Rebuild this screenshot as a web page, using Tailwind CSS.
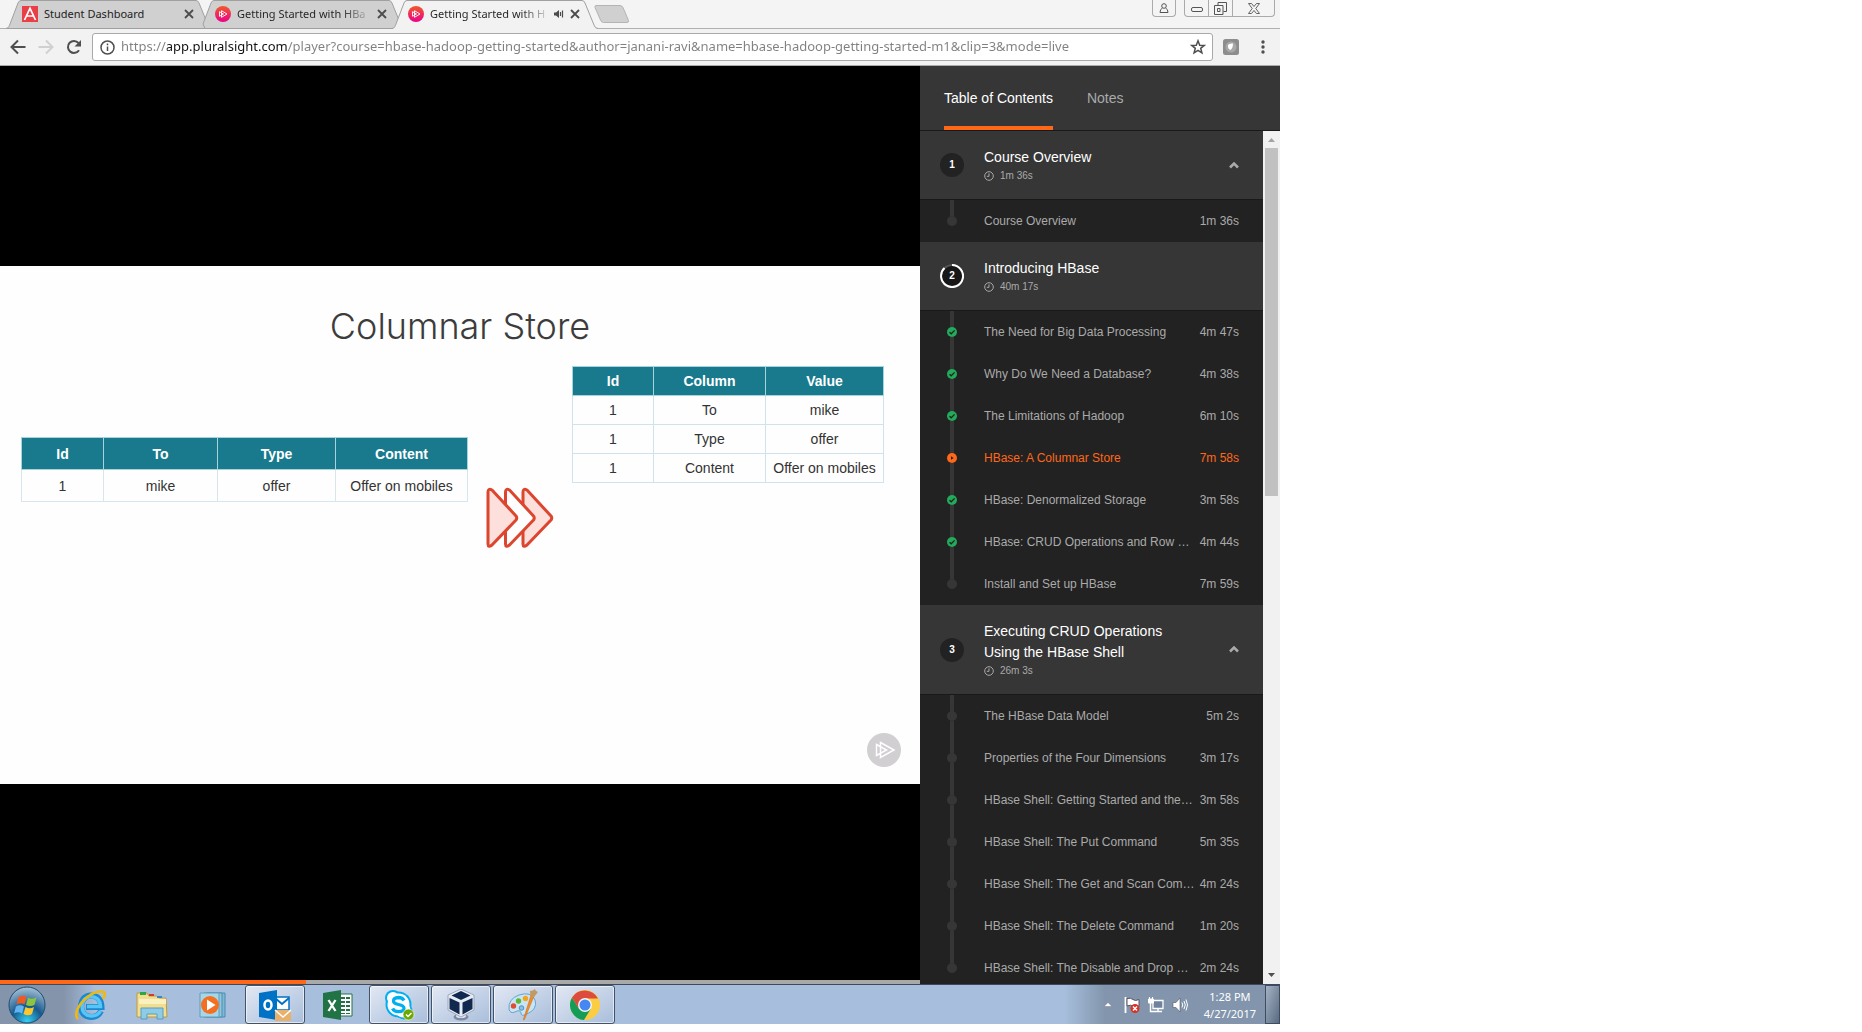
<!DOCTYPE html>
<html lang="en">
<head>
<meta charset="utf-8">
<title>Getting Started with HBase - Player</title>
<script src="https://cdn.jsdelivr.net/npm/@tailwindcss/browser@4"></script>
</head>
<body class="bg-white">
<svg class="absolute size-0" aria-hidden="true">
  <defs>
    <linearGradient id="ps" x1="0" y1="0" x2="0" y2="1"><stop offset="0" stop-color="#f05a28"/><stop offset="1" stop-color="#ec008c"/></linearGradient>
    <radialGradient id="orb" cx=".5" cy=".95" r=".95"><stop offset="0" stop-color="#35d0f5"/><stop offset=".45" stop-color="#17598c"/><stop offset="1" stop-color="#a9c3d8"/></radialGradient>
  </defs>
  <symbol id="close" viewBox="0 0 10 10"><path d="M1 1l8 8M9 1l-8 8" stroke="#4c4c4c" stroke-width="1.8"/></symbol>
  <symbol id="pluralsight" viewBox="0 0 16 16"><circle cx="8" cy="8" r="8" fill="url(#ps)"/><path d="M6.500 4.700L12 8l-5.500 3.300zM4.500 5.700L8.500 8l-4 2.300z" fill="none" stroke="#fff" stroke-width=".9"/></symbol>
  <symbol id="done" viewBox="0 0 10 10"><circle cx="5" cy="5" r="5" fill="#22ab5b"/><path d="M2.500 5.200l1.700 1.600L7.600 3.400" fill="none" stroke="#222" stroke-width="1.300"/></symbol>
  <symbol id="playing" viewBox="0 0 10 10"><circle cx="5" cy="5" r="5" fill="#ff6719"/><path d="M4 3.200v3.600L6.600 5z" fill="#222"/></symbol>
  <symbol id="clock" viewBox="0 0 10 10"><circle cx="5" cy="5" r="4.300" fill="none" stroke="#aaa"/><path d="M5 2.300V5.300H2.800" fill="none" stroke="#aaa"/></symbol>
  <symbol id="up" viewBox="0 0 10 7"><path d="M1 5.500l4-4 4 4" fill="none" stroke="#aaa" stroke-width="2.500"/></symbol>
</svg>

<div class="mx-0 flex h-screen w-full max-w-7xl flex-col pb-2">
  <!-- Browser tabs -->
  <header class="shrink-0 bg-[#f2f2f2] font-['Noto_Sans',sans-serif] text-[#222]">
    <div class="flex h-[29px] items-stretch border-b border-[#b0b0b0] bg-[#f4f4f4] pl-[6px]">
      <div class="relative flex w-[193px] items-center pr-[5px] pl-4">
        <svg class="absolute top-0 left-0 h-[29px] w-[206px]" viewBox="0 0 206 29"><path d="M0 28.500C3 28 3 26 4 24L12 3Q13 .5 15 .5H190Q192 .5 193 3L202 25Q203 28.500 206 28.500z" fill="#d0d0d0" stroke="#a0a0a0"/></svg>
        <svg class="relative size-4 shrink-0" viewBox="0 0 16 16"><path d="M0 0h16v16H0z" fill="#e93f46"/><path d="M2.500 14L8 2.300 13.500 14M4.500 10h7" fill="none" stroke="#fff" stroke-width="1.700"/></svg>
        <a href="#" class="relative ml-[6px] flex-1 text-[11px] whitespace-nowrap">Student Dashboard</a>
        <button aria-label="Close tab" class="relative"><svg class="size-[10px]"><use href="#close"/></svg></button>
      </div>
      <div class="relative flex w-[193px] items-center pr-[5px] pl-4">
        <svg class="absolute top-0 left-0 h-[29px] w-[206px]" viewBox="0 0 206 29"><path d="M4 24L12 3Q13 .5 15 .5H190Q192 .5 193 3L202 25Q203 28.500 206 28.500H6z" fill="#d0d0d0" stroke="#a0a0a0"/></svg>
        <svg class="relative size-4 shrink-0"><use href="#pluralsight"/></svg>
        <a href="#" class="relative ml-[6px] bg-linear-to-r from-[#222] from-80% to-[#222]/20 bg-clip-text text-[11px] whitespace-nowrap text-transparent">Getting Started with HBa</a>
        <button aria-label="Close tab" class="relative ml-auto"><svg class="size-[10px]"><use href="#close"/></svg></button>
      </div>
      <div class="relative flex w-[193px] items-center pr-[5px] pl-4">
        <svg class="absolute top-0 left-0 h-[29px] w-[206px]" viewBox="0 0 206 29"><path d="M0 29C3 28 3 26 4 24L12 3Q13 .5 15 .5H190Q192 .5 193 3L202 25Q203 28 206 29z" fill="#f2f2f2"/><path d="M0 28.500C3 28 3 26 4 24L12 3Q13 .5 15 .5H190Q192 .5 193 3L202 25Q203 28.500 206 28.500" fill="none" stroke="#a0a0a0"/></svg>
        <svg class="relative size-4 shrink-0"><use href="#pluralsight"/></svg>
        <a href="#" class="relative ml-[6px] bg-linear-to-r from-[#222] from-80% to-[#222]/20 bg-clip-text text-[11px] whitespace-nowrap text-transparent">Getting Started with H</a>
        <svg class="relative mr-[6px] ml-auto h-[10px] w-[10px] shrink-0" viewBox="0 0 10 10"><path d="M0 3.500h2L5 1v8L2 6.500H0z" fill="#4c4c4c"/><path d="M6.500 3v4M8.500 1.500v7" stroke="#4c4c4c" stroke-width="1.200"/></svg>
        <button aria-label="Close tab" class="relative"><svg class="size-[10px]"><use href="#close"/></svg></button>
      </div>
      <button aria-label="New tab" class="ml-[9px] self-center"><svg class="h-[18px] w-[36px]" viewBox="0 0 36 18"><path d="M2 .5H26Q28 .5 29 2.500L34.500 15.500Q35 17.500 33 17.500H9.500Q7.500 17.500 6.500 15L1 2.500Q.5 .5 2 .5z" fill="#d0d0d0" stroke="#b4b4b4"/></svg></button>
      <div class="mr-[5px] ml-auto flex h-[17px] text-[#555]">
        <button aria-label="User" class="mr-2 flex w-6 items-center justify-center rounded-b border border-t-0 border-[#aaa]"><svg class="h-[11px] w-[10px]" viewBox="0 0 10 11" fill="none" stroke="currentColor"><circle cx="5" cy="3" r="2.300"/><path d="M3.500 5Q1 6 1 9.500H9Q9 6 6.500 5"/></svg></button>
        <button aria-label="Minimize" class="flex w-[25px] items-center justify-center rounded-bl border border-t-0 border-[#aaa] pt-[3px]"><svg class="h-[5px] w-3" viewBox="0 0 12 5" fill="none" stroke="currentColor"><rect x=".5" y=".5" width="11" height="4" rx="1.500"/></svg></button>
        <button aria-label="Restore" class="flex w-6 items-center justify-center border-r border-b border-[#aaa]"><svg class="size-[13px]" viewBox="0 0 13 13" fill="none" stroke="currentColor"><path d="M4 3.500V.5h8.500v9h-3M.5 3.500h8.500v9H.5zM3.500 6.500H6v3H3.500z"/></svg></button>
        <button aria-label="Close" class="flex w-[42px] items-center justify-center rounded-br border-r border-b border-[#aaa]"><svg class="h-[11px] w-3" viewBox="0 0 12 11" fill="none" stroke="currentColor" stroke-width=".9"><path d="M.5.5h3L6 3.500 8.500.5h3L7.800 5.500l3.700 5h-3L6 7.500l-2.500 3h-3l3.700-5z"/></svg></button>
      </div>
    </div>
    <!-- Address bar -->
    <div class="flex h-[37px] items-center border-b border-[#a8aca8] pr-3 pl-[10px]">
      <button aria-label="Back"><svg class="size-4" viewBox="0 0 16 16" fill="none" stroke="#4f4f4f" stroke-width="2"><path d="M15.500 8H2M8 1.500L1.500 8 8 14.500"/></svg></button>
      <button aria-label="Forward" class="ml-3"><svg class="size-4" viewBox="0 0 16 16" fill="none" stroke="#d0d0d0" stroke-width="2"><path d="M.5 8H14M8 1.500L14.500 8 8 14.500"/></svg></button>
      <button aria-label="Reload" class="ml-3"><svg class="size-4" viewBox="0 0 16 16"><path d="M13 11.200A6 6 0 1 1 12.500 4" fill="none" stroke="#4f4f4f" stroke-width="2"/><path d="M15 1v6.500H8.500z" fill="#4f4f4f"/></svg></button>
      <div class="ml-[10px] flex h-7 flex-1 items-center rounded-[3px] border border-[#a9a9a9] bg-white pr-[6px] pl-[7px]">
        <svg class="size-[15px]" viewBox="0 0 15 15" fill="none" stroke="#4f4f4f" stroke-width="1.500"><circle cx="7.500" cy="7.500" r="6.500"/><path d="M7.500 6.500v4.500M7.500 3.500v1.700"/></svg>
        <input aria-label="Address" class="ml-[6px] flex-1 bg-[linear-gradient(90deg,#808080_46px,#111_46px,#111_167px,#808080_167px)] bg-clip-text text-[13px] text-transparent outline-none" value="https://app.pluralsight.com/player?course=hbase-hadoop-getting-started&amp;author=janani-ravi&amp;name=hbase-hadoop-getting-started-m1&amp;clip=3&amp;mode=live">
        <button aria-label="Bookmark"><svg class="size-4" viewBox="0 0 16 16" fill="none" stroke="#4f4f4f" stroke-width="1.500"><path d="M8 1.800l1.700 4.400 4.500.2-3.500 2.900 1.200 4.500L8 11.300l-3.900 2.500 1.200-4.500L1.800 6.400l4.500-.2z"/></svg></button>
      </div>
      <button aria-label="Extension" class="ml-[10px]"><svg class="size-4" viewBox="0 0 16 16"><rect width="16" height="16" rx="2.500" fill="#8d8d8d"/><circle cx="8" cy="8" r="5.500" fill="#a8a8a8"/><path d="M5 6Q6 4 10 4.500 10 9 7.500 11 4.500 10 5 6z" fill="#fff"/></svg></button>
      <button aria-label="Menu" class="ml-[18px]"><svg class="h-4 w-[11px]" viewBox="0 0 11 16" fill="#4f4f4f"><circle cx="6" cy="3" r="1.700"/><circle cx="6" cy="8" r="1.700"/><circle cx="6" cy="13" r="1.700"/></svg></button>
    </div>
  </header>

  <div class="flex min-h-0 flex-1 font-['Liberation_Sans',Arial,sans-serif]">
    <!-- Video -->
    <main class="relative flex min-w-0 flex-1 items-center bg-black">
      <section class="relative aspect-video w-full bg-[#fefefe] pt-9 text-[#333]">
        <h1 class="text-center font-['Inter',sans-serif] text-4xl leading-12 font-light text-[#3c3c3c]">Columnar Store</h1>
        <div class="mt-4 flex items-start pr-9 pl-[21px]">
          <table class="mt-[71px] w-[447px] table-fixed border-collapse text-center text-sm">
            <colgroup><col class="w-[82px]"><col class="w-[114px]"><col class="w-[118px]"><col></colgroup>
            <thead><tr class="h-8 bg-[#187a8c] text-white"><th class="border border-[#a9d3da]">Id</th><th class="border border-[#a9d3da]">To</th><th class="border border-[#a9d3da]">Type</th><th class="border border-[#a9d3da]">Content</th></tr></thead>
            <tbody><tr class="h-8"><td class="border border-[#d7e5ec]">1</td><td class="border border-[#d7e5ec]">mike</td><td class="border border-[#d7e5ec]">offer</td><td class="border border-[#d7e5ec]">Offer on mobiles</td></tr></tbody>
          </table>
          <svg class="mt-[121px] ml-[18px] h-[62px] w-[68px]" viewBox="0 0 68 62" fill="#fddfdb" stroke="#dc462f" stroke-width="3" stroke-linejoin="round">
            <path d="M37 5Q37 1 41 3L65 29Q66.500 31 65 33L41 58Q37 61 37 57z"/>
            <path d="M19.500 5Q19.500 1 23.500 3L47.500 29Q49 31 47.500 33L23.500 58Q19.500 61 19.500 57z" fill="#fefefe"/>
            <path d="M2 5Q2 1 6 3L30 29Q31.500 31 30 33L6 58Q2 61 2 57z"/>
          </svg>
          <table class="ml-auto w-[312px] table-fixed border-collapse text-center text-sm">
            <colgroup><col class="w-[81px]"><col class="w-[112px]"><col></colgroup>
            <thead><tr class="h-[29px] bg-[#187a8c] text-white"><th class="border border-[#a9d3da]">Id</th><th class="border border-[#a9d3da]">Column</th><th class="border border-[#a9d3da]">Value</th></tr></thead>
            <tbody>
              <tr class="h-[29px]"><td class="border border-[#cfe3ec]">1</td><td class="border border-[#cfe3ec]">To</td><td class="border border-[#cfe3ec]">mike</td></tr>
              <tr class="h-[29px]"><td class="border border-[#cfe3ec]">1</td><td class="border border-[#cfe3ec]">Type</td><td class="border border-[#cfe3ec]">offer</td></tr>
              <tr class="h-[29px]"><td class="border border-[#cfe3ec]">1</td><td class="border border-[#cfe3ec]">Content</td><td class="border border-[#cfe3ec]">Offer on mobiles</td></tr>
            </tbody>
          </table>
        </div>
        <svg class="absolute right-[19px] bottom-[17px] size-[34px]" viewBox="0 0 34 34"><circle cx="17" cy="17" r="17" fill="#d1cfd1"/><path d="M13.500 9.500L27 17l-13.500 7.500zM9.500 11.500L19.500 17l-10 5.500z" fill="none" stroke="#fff" stroke-width="1.500"/></svg>
      </section>
      <div class="absolute inset-x-0 bottom-0 h-1 bg-[#a9a9a9]"><div class="h-1 bg-[#ff6719]" style="width:33.3%"></div></div>
    </main>

    <!-- Course sidebar -->
    <aside class="flex w-[360px] shrink-0 flex-col bg-[#222] text-[#aaa]">
      <nav class="flex h-[65px] shrink-0 gap-[34px] border-b border-[#191919] bg-[#363636] px-6 text-sm">
        <button class="border-b-4 border-[#ff6719] pt-1 text-white">Table of Contents</button>
        <button class="border-b-4 border-transparent pt-1">Notes</button>
      </nav>
      <div class="flex min-h-0 flex-1">
        <div class="min-w-0 flex-1 overflow-hidden text-xs">
          <button class="flex h-[69px] w-full items-center border-b border-[#191919] bg-[#363636] pr-6 text-left">
            <span class="flex w-16 justify-center"><span class="flex size-6 items-center justify-center rounded-full bg-[#222] text-[10px] font-bold text-white">1</span></span>
            <span class="flex-1"><span class="block text-sm leading-[21px] text-white">Course Overview</span><span class="flex items-center gap-[6px] text-[10px] leading-4"><svg class="size-[10px]"><use href="#clock"/></svg>1m 36s</span></span>
            <svg class="h-[7px] w-[10px]"><use href="#up"/></svg>
          </button>
          <ul>
            <li><a href="#" class="flex h-[42px] items-center pr-6"><span class="flex h-full w-16 flex-col items-center"><i class="w-1 flex-1 bg-[#363636]"></i><i class="size-[10px] rounded-full bg-[#363636]"></i><i class="w-1 flex-1"></i></span><span class="flex-1 whitespace-nowrap">Course Overview</span><span>1m 36s</span></a></li>
          </ul>

          <button class="flex h-[69px] w-full items-center border-b border-[#191919] bg-[#363636] pr-6 text-left">
            <span class="flex w-16 justify-center"><span class="relative flex size-6 items-center justify-center rounded-full bg-[#171717] text-[10px] font-bold text-white"><svg class="absolute inset-0 size-6" viewBox="0 0 24 24" fill="none" stroke-width="2"><circle cx="12" cy="12" r="11" stroke="#555"/><path d="M12 1A11 11 0 1 1 4.500 4" stroke="#fff"/></svg>2</span></span>
            <span class="flex-1"><span class="block text-sm leading-[21px] text-white">Introducing HBase</span><span class="flex items-center gap-[6px] text-[10px] leading-4"><svg class="size-[10px]"><use href="#clock"/></svg>40m 17s</span></span>
          </button>
          <ul>
            <li><a href="#" class="flex h-[42px] items-center pr-6"><span class="flex h-full w-16 flex-col items-center"><i class="w-1 flex-1 bg-[#363636]"></i><svg class="size-[10px]"><use href="#done"/></svg><i class="w-1 flex-1 bg-[#363636]"></i></span><span class="flex-1 whitespace-nowrap">The Need for Big Data Processing</span><span>4m 47s</span></a></li>
            <li><a href="#" class="flex h-[42px] items-center pr-6"><span class="flex h-full w-16 flex-col items-center"><i class="w-1 flex-1 bg-[#363636]"></i><svg class="size-[10px]"><use href="#done"/></svg><i class="w-1 flex-1 bg-[#363636]"></i></span><span class="flex-1 whitespace-nowrap">Why Do We Need a Database?</span><span>4m 38s</span></a></li>
            <li><a href="#" class="flex h-[42px] items-center pr-6"><span class="flex h-full w-16 flex-col items-center"><i class="w-1 flex-1 bg-[#363636]"></i><svg class="size-[10px]"><use href="#done"/></svg><i class="w-1 flex-1 bg-[#363636]"></i></span><span class="flex-1 whitespace-nowrap">The Limitations of Hadoop</span><span>6m 10s</span></a></li>
            <li><a href="#" class="flex h-[42px] items-center pr-6 text-[#ff6719]"><span class="flex h-full w-16 flex-col items-center"><i class="w-1 flex-1 bg-[#363636]"></i><svg class="size-[10px]"><use href="#playing"/></svg><i class="w-1 flex-1 bg-[#363636]"></i></span><span class="flex-1 whitespace-nowrap">HBase: A Columnar Store</span><span>7m 58s</span></a></li>
            <li><a href="#" class="flex h-[42px] items-center pr-6"><span class="flex h-full w-16 flex-col items-center"><i class="w-1 flex-1 bg-[#363636]"></i><svg class="size-[10px]"><use href="#done"/></svg><i class="w-1 flex-1 bg-[#363636]"></i></span><span class="flex-1 whitespace-nowrap">HBase: Denormalized Storage</span><span>3m 58s</span></a></li>
            <li><a href="#" class="flex h-[42px] items-center pr-6"><span class="flex h-full w-16 flex-col items-center"><i class="w-1 flex-1 bg-[#363636]"></i><svg class="size-[10px]"><use href="#done"/></svg><i class="w-1 flex-1 bg-[#363636]"></i></span><span class="flex-1 whitespace-nowrap">HBase: CRUD Operations and Row …</span><span>4m 44s</span></a></li>
            <li><a href="#" class="flex h-[42px] items-center pr-6"><span class="flex h-full w-16 flex-col items-center"><i class="w-1 flex-1 bg-[#363636]"></i><i class="size-[10px] rounded-full bg-[#363636]"></i><i class="w-1 flex-1"></i></span><span class="flex-1 whitespace-nowrap">Install and Set up HBase</span><span>7m 59s</span></a></li>
          </ul>

          <button class="flex h-[90px] w-full items-center border-b border-[#191919] bg-[#363636] pr-6 text-left">
            <span class="flex w-16 justify-center"><span class="flex size-6 items-center justify-center rounded-full bg-[#222] text-[10px] font-bold text-white">3</span></span>
            <span class="flex-1"><span class="block text-sm leading-[21px] text-white">Executing CRUD Operations<br>Using the HBase Shell</span><span class="flex items-center gap-[6px] text-[10px] leading-4"><svg class="size-[10px]"><use href="#clock"/></svg>26m 3s</span></span>
            <svg class="h-[7px] w-[10px]"><use href="#up"/></svg>
          </button>
          <ul>
            <li><a href="#" class="flex h-[42px] items-center pr-6"><span class="flex h-full w-16 flex-col items-center"><i class="w-1 flex-1 bg-[#363636]"></i><i class="size-[10px] rounded-full bg-[#363636]"></i><i class="w-1 flex-1 bg-[#363636]"></i></span><span class="flex-1 whitespace-nowrap">The HBase Data Model</span><span>5m 2s</span></a></li>
            <li><a href="#" class="flex h-[42px] items-center pr-6"><span class="flex h-full w-16 flex-col items-center"><i class="w-1 flex-1 bg-[#363636]"></i><i class="size-[10px] rounded-full bg-[#363636]"></i><i class="w-1 flex-1 bg-[#363636]"></i></span><span class="flex-1 whitespace-nowrap">Properties of the Four Dimensions</span><span>3m 17s</span></a></li>
            <li><a href="#" class="flex h-[42px] items-center pr-6"><span class="flex h-full w-16 flex-col items-center"><i class="w-1 flex-1 bg-[#363636]"></i><i class="size-[10px] rounded-full bg-[#363636]"></i><i class="w-1 flex-1 bg-[#363636]"></i></span><span class="flex-1 whitespace-nowrap">HBase Shell: Getting Started and the…</span><span>3m 58s</span></a></li>
            <li><a href="#" class="flex h-[42px] items-center pr-6"><span class="flex h-full w-16 flex-col items-center"><i class="w-1 flex-1 bg-[#363636]"></i><i class="size-[10px] rounded-full bg-[#363636]"></i><i class="w-1 flex-1 bg-[#363636]"></i></span><span class="flex-1 whitespace-nowrap">HBase Shell: The Put Command</span><span>5m 35s</span></a></li>
            <li><a href="#" class="flex h-[42px] items-center pr-6"><span class="flex h-full w-16 flex-col items-center"><i class="w-1 flex-1 bg-[#363636]"></i><i class="size-[10px] rounded-full bg-[#363636]"></i><i class="w-1 flex-1 bg-[#363636]"></i></span><span class="flex-1 whitespace-nowrap">HBase Shell: The Get and Scan Com…</span><span>4m 24s</span></a></li>
            <li><a href="#" class="flex h-[42px] items-center pr-6"><span class="flex h-full w-16 flex-col items-center"><i class="w-1 flex-1 bg-[#363636]"></i><i class="size-[10px] rounded-full bg-[#363636]"></i><i class="w-1 flex-1 bg-[#363636]"></i></span><span class="flex-1 whitespace-nowrap">HBase Shell: The Delete Command</span><span>1m 20s</span></a></li>
            <li><a href="#" class="flex h-[42px] items-center pr-6"><span class="flex h-full w-16 flex-col items-center"><i class="w-1 flex-1 bg-[#363636]"></i><i class="size-[10px] rounded-full bg-[#363636]"></i><i class="w-1 flex-1"></i></span><span class="flex-1 whitespace-nowrap">HBase Shell: The Disable and Drop …</span><span>2m 24s</span></a></li>
          </ul>
        </div>
        <!-- Scroll bar -->
        <div class="flex w-[17px] flex-col items-center bg-[#f1f1f1]">
          <svg class="h-[17px] w-[17px] shrink-0" viewBox="0 0 17 17"><path d="M5 11l3.500-4 3.500 4z" fill="#a3a3a3"/></svg>
          <div class="flex-1"><div class="w-[13px] bg-[#c1c1c1]" style="height:42.5%"></div></div>
          <svg class="h-[17px] w-[17px] shrink-0" viewBox="0 0 17 17"><path d="M5 6l3.500 4L12 6z" fill="#505050"/></svg>
        </div>
      </div>
    </aside>
  </div>

  <!-- Taskbar -->
  <footer class="flex h-10 shrink-0 border-t border-[#3d4a5c] bg-[linear-gradient(90deg,#8494ab_0,#8494ab_64px,#a7bfdd_96px,#a7bfdd_calc(100%_-_216px),#8295ac_calc(100%_-_175px),#8295ac)] font-['Noto_Sans',sans-serif]">
    <button aria-label="Start" class="flex w-[59px] items-center pl-2"><svg class="size-[38px]" viewBox="0 0 38 38"><circle cx="19" cy="19" r="18" fill="url(#orb)" stroke="#1d4d70"/><path d="M10.500 11q4-2.500 8 0l-2 7.500q-4-2.500-8 0z" fill="#ee5a24"/><path d="M20 11.700q4 2.500 8.500-.5l-2 7.500q-4 2.500-8.500.3z" fill="#8cc63e"/><path d="M8 20.500q4-2.500 8 0l-2 7q-4-2.500-8 0z" fill="#62b5f0"/><path d="M17.500 21q4 2.500 8.500 0l-2 7q-4 2.500-8.500 0z" fill="#fcc72c"/></svg></button>
    <button aria-label="Internet Explorer" class="flex w-[62px] items-center justify-center"><svg class="size-8" viewBox="0 0 32 32"><path d="M27 22Q24 28 17 28 7 27 7 17 8 7 17 6.500 27 7 27.500 18H12" fill="none" stroke="#1d87cf" stroke-width="6"/><path d="M26.500 22Q24 27 17 27 8 26 8 17 9 8 17 7.500 26 8 26.500 17.500H13" fill="none" stroke="#57c6f4" stroke-width="3.500"/><path d="M4 30Q-1 25 8 13 20 0 30 3q2 2-1 7" fill="none" stroke="#f0b90c" stroke-width="2.500"/></svg></button>
    <button aria-label="Explorer" class="flex w-[62px] items-center justify-center"><svg class="size-8" viewBox="0 0 32 32"><path d="M1 28V4h10l2 3h8l2 2h7l1 19z" fill="#f2de8f" stroke="#bd9a3f"/><path d="M3 10h27v5H3z" fill="#fbf1c0"/><path d="M4 3h6v3H4z" fill="#27a845"/><path d="M13 5h5v2h-5z" fill="#d23a2a"/><path d="M21 7h5v2h-5z" fill="#3a87cf"/><path d="M5 30V19h22v11h-6v-5H11v5z" fill="#8ecbe6" stroke="#5b9cc0"/></svg></button>
    <button aria-label="Media Player" class="flex w-[62px] items-center justify-center"><svg class="h-[26px] w-[30px]" viewBox="0 0 30 26"><path d="M8 1h18v24H8z" fill="#7fb8d4" stroke="#4c8db0"/><path d="M5 1h18v24H5z" fill="#92c7de" stroke="#4c8db0"/><path d="M1 1h19v24H1z" fill="#a8d6e8" stroke="#5e9dbd"/><circle cx="11" cy="13" r="9" fill="#f37021"/><path d="M8 7.500v11l8.500-5.500z" fill="#fff"/></svg></button>
    <div class="flex w-[62px] pr-[2px]"><button aria-label="Outlook" class="flex w-full items-center justify-center rounded-[3px] border border-[#445266] bg-linear-to-br from-[#e2e8f4] to-[#a9bedb] ring-1 ring-white/60 ring-inset"><svg class="size-8" viewBox="0 0 32 32"><path d="M16 8h14v13H16z" fill="#fff" stroke="#0072c6" stroke-width="1.500"/><path d="M16 9l7 6 7-6" fill="none" stroke="#0072c6" stroke-width="2"/><path d="M0 4l18-3v30L0 28z" fill="#0072c6"/><ellipse cx="9" cy="16" rx="3.500" ry="4.500" fill="none" stroke="#fff" stroke-width="2.500"/><path d="M16 21h16v11H16z" fill="#e8b06b"/><path d="M16 21l8 7 8-7" fill="none" stroke="#fff" stroke-width="1.500"/></svg></button></div>
    <button aria-label="Excel" class="flex w-[62px] items-center justify-center"><svg class="size-[30px]" viewBox="0 0 30 30"><path d="M16 4h13v22H16z" fill="#fff" stroke="#217346"/><path d="M18 7h4v2h-4zm5 0h4v2h-4zm-5 4h4v2h-4zm5 0h4v2h-4zm-5 4h4v2h-4zm5 0h4v2h-4zm-5 4h4v2h-4zm5 0h4v2h-4zm-5 4h4v1h-4zm5 0h4v1h-4z" fill="#217346"/><path d="M0 3l18-3v30L0 27z" fill="#217346"/><path d="M5.500 10l7 11M12.500 10l-7 11" stroke="#fff" stroke-width="2.300"/></svg></button>
    <div class="flex w-[62px] pr-[2px]"><button aria-label="Skype" class="flex w-full items-center justify-center rounded-[3px] border border-[#445266] bg-linear-to-br from-[#e2e8f4] to-[#a9bedb] ring-1 ring-white/60 ring-inset"><svg class="size-8" viewBox="0 0 32 32"><circle cx="10" cy="9" r="8" fill="#00aff0"/><circle cx="21" cy="22" r="8.500" fill="#00aff0"/><circle cx="15.500" cy="15.500" r="13" fill="#00aff0"/><circle cx="10" cy="9" r="6" fill="#fff"/><circle cx="20" cy="21" r="7.500" fill="#fff"/><circle cx="15.500" cy="15.500" r="11" fill="#fff"/><path d="M21 11.500Q19.500 8.500 15.500 8.500 10.500 8.700 10.500 12 10.500 14.500 15.500 15.500 21 16.500 21 19.300 21 22.500 15.500 22.700 11 22.500 9.500 19.500" fill="none" stroke="#00aff0" stroke-width="3.300"/><circle cx="25.500" cy="25.500" r="5.500" fill="#6ba900" stroke="#fff" stroke-width=".6"/><path d="M23 25.500l2 2 3.500-3.500" fill="none" stroke="#fff" stroke-width="1.500"/></svg></button></div>
    <div class="flex w-[62px] pr-[2px]"><button aria-label="VirtualBox" class="flex w-full items-center justify-center rounded-[3px] border border-[#445266] bg-linear-to-br from-[#e2e8f4] to-[#a9bedb] ring-1 ring-white/60 ring-inset"><svg class="h-8 w-7" viewBox="0 0 28 32"><ellipse cx="14" cy="28" rx="7.500" ry="3.500" fill="#7f8ba3"/><ellipse cx="14" cy="27" rx="5" ry="2" fill="#dfe4ee"/><path d="M14 0l13 6v15L14 28 1 21V6z" fill="#e7ecf4" stroke="#9aa7bd"/><path d="M14 2l9.500 4.500L14 11 4.500 6.500zM2.500 9L12.500 13.500v12L2.500 20zM25.500 9L15.500 13.500v12L25.500 20z" fill="#12294f"/></svg></button></div>
    <div class="flex w-[62px] pr-[2px]"><button aria-label="Paint" class="flex w-full items-center justify-center rounded-[3px] border border-[#445266] bg-linear-to-br from-[#e2e8f4] to-[#a9bedb] ring-1 ring-white/60 ring-inset"><svg class="size-8" viewBox="0 0 32 32"><path d="M2 20Q1 10 12 6 24 2 28 11 31 20 20 25 14 28 14 24 13 20 8 23 3 25 2 20z" fill="#c9e4f4" stroke="#62a5cd"/><circle cx="6.500" cy="17" r="2.700" fill="#e14b32"/><circle cx="11.500" cy="12" r="2.700" fill="#5bb735"/><circle cx="18.500" cy="9.500" r="2.700" fill="#f3a521"/><circle cx="14.500" cy="19" r="2.300" fill="#8bc2e3" stroke="#4f93be"/><path d="M27 7L18.500 28q-2 5-2 2L24 6z" fill="#f28c28" stroke="#c66a17" stroke-width=".5"/><path d="M23.500 8L23 2q3 0 5-2 0 2 3 3l-4 5z" fill="#c19a63"/></svg></button></div>
    <div class="flex w-[62px] pr-[2px]"><button aria-label="Chrome" class="flex w-full items-center justify-center rounded-[3px] border border-[#445266] bg-linear-to-br from-[#e2e8f4] to-[#a9bedb] ring-1 ring-white/60 ring-inset"><svg class="size-[30px]" viewBox="0 0 30 30"><circle cx="15" cy="15" r="15" fill="#fccd40"/><path d="M2 7.500A15 15 0 0 0 14 30L21 18.500 9 18.500z" fill="#159d58"/><path d="M2 7.500A15 15 0 0 1 28 8.500H15L8.800 18.500z" fill="#dd4b3e"/><circle cx="15" cy="15" r="7" fill="#f4f4f4"/><circle cx="15" cy="15" r="5.500" fill="#4688f1"/></svg></button></div>
    <div class="ml-auto flex items-center text-white">
      <button aria-label="Show hidden icons"><svg class="h-[5px] w-2" viewBox="0 0 8 5"><path d="M0 4.500L4 .5l4 4z" fill="#fff" stroke="#667" stroke-width=".4"/></svg></button>
      <svg class="ml-3 size-4" viewBox="0 0 16 16"><path d="M1.500 0v16" stroke="#fff" stroke-width="1.800"/><path d="M3 1.500q4-1 6 1t6 0v7q-4 1.500-6-.3T3 9z" fill="#fff" stroke="#556"/><circle cx="11" cy="11.500" r="4.500" fill="#d83224"/><path d="M9 9.500l4 4M13 9.500l-4 4" stroke="#fff" stroke-width="1.500"/></svg>
      <svg class="ml-2 size-4" viewBox="0 0 16 16"><path d="M5 3.500h10v8H5z" fill="#71839c" stroke="#fff" stroke-width="1.300"/><path d="M7 14.500h7M10 12v2M2.500 5v9.500H7" fill="none" stroke="#fff" stroke-width="1.400"/><path d="M.5 2h5v4h-5zM1.500 0v2M4.500 0v2" fill="#fff" stroke="#fff"/></svg>
      <svg class="ml-2 size-4" viewBox="0 0 16 16"><path d="M1 5.500h3L8 1v14l-4-4.500H1z" fill="#fff" stroke="#556" stroke-width=".6"/><path d="M10 5.500q1.500 2.500 0 5M12 4q2.500 4 0 8M14 2.500q3 5.500 0 11" fill="none" stroke="#fff"/></svg>
      <time class="ml-4 text-center text-[11px] leading-[17px]">1:28 PM<br>4/27/2017</time>
      <button aria-label="Show desktop" class="ml-[9px] h-full w-[15px] border border-[#3f4c5e] bg-linear-to-br from-[#a5b3c4] to-[#5a6b82]"></button>
    </div>
  </footer>
</div>
</body>
</html>
